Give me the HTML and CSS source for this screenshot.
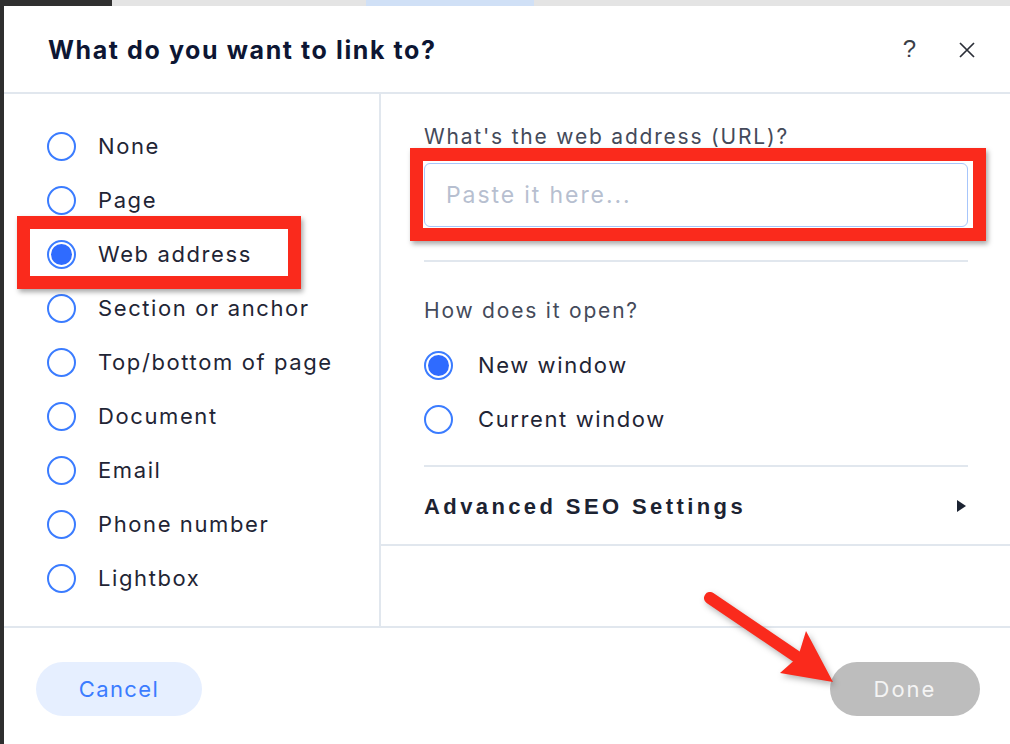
FILE: index.html
```html
<!DOCTYPE html>
<html>
<head>
<meta charset="utf-8">
<link rel="stylesheet" href="styles.css">
</head>
<body>
<div class="screen">
  <div class="topstrip">
    <span class="seg seg-dark"></span>
    <span class="seg seg-gray"></span>
    <span class="seg seg-blue"></span>
    <span class="seg seg-rest"></span>
  </div>
  <div class="main">
    <div class="sidebar"></div>
    <div class="dialog">
      <div class="header">
        <h1 class="title">What do you want to link to?</h1>
        <div class="header-actions">
          <span class="help">?</span>
          <svg class="close" width="18" height="18" viewBox="0 0 18 18"><path d="M2 2 L16 16 M16 2 L2 16" stroke="#2b2f38" stroke-width="1.7" fill="none"/></svg>
        </div>
      </div>
      <div class="body">
        <div class="options">
          <div class="opt"><span class="radio"></span><span class="opt-label">None</span></div>
          <div class="opt"><span class="radio"></span><span class="opt-label">Page</span></div>
          <div class="opt"><span class="radio checked"></span><span class="opt-label">Web address</span></div>
          <div class="opt"><span class="radio"></span><span class="opt-label">Section or anchor</span></div>
          <div class="opt"><span class="radio"></span><span class="opt-label">Top/bottom of page</span></div>
          <div class="opt"><span class="radio"></span><span class="opt-label">Document</span></div>
          <div class="opt"><span class="radio"></span><span class="opt-label">Email</span></div>
          <div class="opt"><span class="radio"></span><span class="opt-label">Phone number</span></div>
          <div class="opt"><span class="radio"></span><span class="opt-label">Lightbox</span></div>
        </div>
        <div class="panel">
          <div class="panel-inner">
            <div class="field-label">What's the web address (URL)?</div>
            <div class="input"><span class="placeholder">Paste it here...</span></div>
            <div class="divider div-1"></div>
            <div class="field-label open-label">How does it open?</div>
            <div class="open-opts">
              <div class="opt small"><span class="radio checked"></span><span class="opt-label">New window</span></div>
              <div class="opt small"><span class="radio"></span><span class="opt-label">Current window</span></div>
            </div>
            <div class="divider div-2"></div>
          </div>
          <div class="seo">
            <span class="seo-label">Advanced SEO Settings</span>
            <svg class="seo-arrow" width="10" height="12" viewBox="0 0 10 12"><polygon points="1,0 10,6 1,12" fill="#1c2332"/></svg>
          </div>
        </div>
      </div>
      <div class="footer">
        <button class="btn btn-cancel">Cancel</button>
        <button class="btn btn-done">Done</button>
      </div>
    </div>
  </div>

  <div class="hl hl-web"></div>
  <div class="hl hl-url"></div>
  <svg class="arrow" width="1010" height="744" viewBox="0 0 1010 744">
    <g class="arrow-g">
      <line x1="710" y1="598" x2="800" y2="659" stroke="#fa2a1c" stroke-width="12" stroke-linecap="round"/>
      <polygon points="833,682 806,631 798,657 780,673" fill="#fa2a1c"/>
    </g>
  </svg>
</div>
</body>
</html>
```

FILE: styles.css
```css
* { box-sizing: border-box; }
html, body { margin: 0; padding: 0; }
body {
  width: 1010px;
  height: 744px;
  overflow: hidden;
  background: #ffffff;
  font-family: "Inter", "Liberation Sans", sans-serif;
  color: #1c2332;
}
.screen {
  position: relative;
  width: 1010px;
  height: 744px;
  display: flex;
  flex-direction: column;
  background: #2f2f2f;
}
.topstrip {
  display: flex;
  height: 6px;
  flex: none;
}
.seg { display: block; height: 6px; }
.seg-dark { width: 112px; background: #303030; }
.seg-gray { width: 254px; background: #e4e4e4; }
.seg-blue { width: 168px; background: #d0e0f6; }
.seg-rest { flex: 1; background: #e4e4e4; }

.main {
  flex: 1;
  display: flex;
  background: #ffffff;
}
.sidebar {
  width: 4px;
  background: #2e2e2e;
  flex: none;
}
.dialog {
  flex: 1;
  display: flex;
  flex-direction: column;
  background: #fff;
  border-top-left-radius: 7px;
}
.header {
  height: 88px;
  flex: none;
  display: flex;
  align-items: center;
  justify-content: space-between;
  padding: 0 34px 0 44px;
  border-bottom: 2px solid #e1e7ee;
}
.title {
  margin: 0;
  font-size: 25px;
  font-weight: 700;
  color: #0d1633;
  letter-spacing: 1.6px;
  padding-top: 2px;
}
.header-actions {
  display: flex;
  align-items: center;
  gap: 42px;
}
.help {
  font-family: "Liberation Sans", sans-serif;
  font-size: 24px;
  font-weight: 300;
  color: #3b3f48;
}
.close { display: block; margin-top: 2px; }

.body {
  height: 534px;
  flex: none;
  display: flex;
  border-bottom: 2px solid #e1e7ee;
}
.options {
  width: 377px;
  flex: none;
  border-right: 2px solid #e1e7ee;
  padding: 25px 0 0 43px;
}
.opt {
  height: 54px;
  display: flex;
  align-items: center;
}
.radio {
  width: 29px;
  height: 29px;
  border-radius: 50%;
  border: 2px solid #3b7cff;
  flex: none;
  margin-right: 22px;
}
.radio.checked {
  background: #2f6bff;
  background-clip: content-box;
  padding: 2px;
}
.opt-label {
  font-size: 22px;
  color: #1f2535;
  letter-spacing: 1.6px;
}
.panel {
  flex: 1;
  display: flex;
  flex-direction: column;
}
.panel-inner {
  padding: 31px 42px 0 43px;
}
.field-label {
  font-size: 21px;
  line-height: 24px;
  color: #444a5a;
  letter-spacing: 1.8px;
}
.input {
  margin-top: 14px;
  height: 64px;
  border: 1.5px solid #a7c6fb;
  border-radius: 6px;
  display: flex;
  align-items: center;
  padding-left: 21px;
}
.placeholder {
  font-size: 23px;
  color: #b7bfd0;
  letter-spacing: 1.9px;
}
.divider {
  height: 2px;
  background: #e1e7ee;
}
.div-1 { margin-top: 33px; }
.open-label { margin-top: 37px; }
.open-opts { margin-top: 15px; }
.opt.small .radio { margin-right: 25px; }
.div-2 { margin-top: 19px; }
.seo {
  height: 79px;
  display: flex;
  align-items: center;
  justify-content: space-between;
  padding: 0 44px 0 43px;
  border-bottom: 2px solid #e1e7ee;
}
.seo-label {
  font-family: "Liberation Sans", sans-serif;
  font-size: 22px;
  font-weight: 700;
  letter-spacing: 3.4px;
  color: #1c2332;
  padding-top: 3px;
}
.seo-arrow { display: block; }

.footer {
  flex: 1;
  display: flex;
  align-items: flex-start;
  justify-content: space-between;
  padding: 34px 30px 0 32px;
}
.btn {
  height: 54px;
  border: none;
  border-radius: 27px;
  font-family: "Inter", "Liberation Sans", sans-serif;
  font-size: 22px;
}
.btn-cancel {
  width: 166px;
  background: #e6efff;
  color: #3b7cff;
  letter-spacing: 1.4px;
}
.btn-done {
  width: 150px;
  background: #bdbdbd;
  color: #f4f4f4;
  letter-spacing: 2px;
}

.hl {
  position: absolute;
  border: 13px solid #fa2a1c;
  box-shadow: 2px 3px 5px rgba(0,0,0,0.35);
}
.hl-web {
  left: 17px;
  top: 216px;
  width: 284px;
  height: 73px;
}
.hl-url {
  left: 410px;
  top: 148px;
  width: 576px;
  height: 93px;
}
.arrow {
  position: absolute;
  left: 0;
  top: 0;
  pointer-events: none;
}
.arrow-g { filter: drop-shadow(2px 3px 3px rgba(0,0,0,0.3)); }
```
